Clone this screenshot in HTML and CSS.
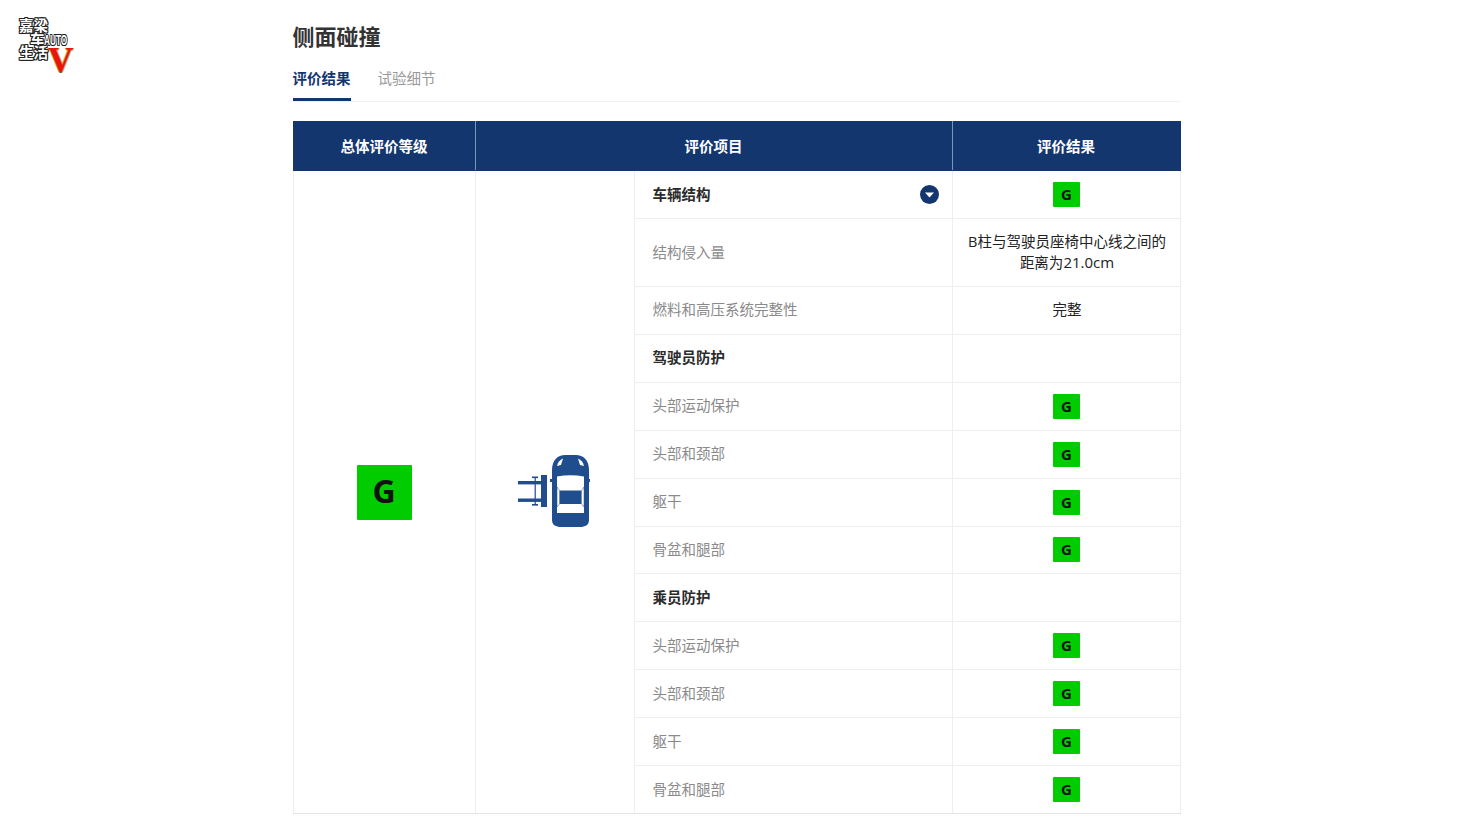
FILE: index.html
```html
<!DOCTYPE html>
<html lang="zh-CN">
<head>
<meta charset="utf-8">
<title>侧面碰撞</title>
<link rel="stylesheet" href="styles.css">
</head>
<body>
<div class="page">
  <aside class="logo-col">
    <div class="logo">
      <div class="logo-line">嘉梁</div>
      <div class="logo-line logo-indent">车<span class="logo-auto">AUTO</span></div>
      <div class="logo-line">生活<span class="logo-v">V</span></div>
    </div>
  </aside>
  <main class="main">
    <h1 class="title">侧面碰撞</h1>
    <nav class="tabs">
      <span class="tab tab-active">评价结果</span>
      <span class="tab">试验细节</span>
    </nav>
    <table class="results">
      <colgroup>
        <col class="c1"><col class="c2"><col class="c3"><col class="c4">
      </colgroup>
      <thead>
        <tr class="h50"><th>总体评价等级</th><th colspan="2">评价项目</th><th>评价结果</th></tr>
      </thead>
      <tbody>
        <tr class="h48">
          <td rowspan="13" class="center span-cell"><span class="badge badge-lg">G</span></td>
          <td rowspan="13" class="center span-cell">
            <svg class="car" viewBox="0 0 72 74" width="72" height="74" aria-hidden="true">
              <g fill="#204d8d">
                <rect x="0" y="27" width="24" height="3.4"/>
                <rect x="0" y="44.5" width="24" height="3.4"/>
                <rect x="23" y="21" width="6" height="32"/>
                <rect x="16.6" y="23" width="1.2" height="28"/>
                <rect x="14" y="22.5" width="6" height="1.6"/>
                <rect x="14" y="50" width="6" height="1.6"/>
                <path d="M34 16C34 6 40 1 47 1H58C65 1 71 6 71 16V66C71 71 67 73 62 73H43C38 73 34 71 34 66Z"/>
                <rect x="32" y="25" width="3" height="3"/>
                <rect x="70" y="25" width="3" height="3"/>
              </g>
              <g fill="#fff">
                <path d="M39 22.500Q52.500 20 66 22.500V59H39Z"/>
                <path d="M39 12C40 8 42 6 45 4.500L43 11Z"/>
                <path d="M66 12C65 8 63 6 60 4.500L62 11Z"/>
              </g>
              <path d="M41.500 36.500H63.500V50H41.500Z" fill="#204d8d"/>
              <path d="M39 33L41.500 36.500V50L39 53Z" stroke="#204d8d" stroke-width=".5" fill="#fff"/>
              <path d="M66 33L63.500 36.500V50L66 53Z" stroke="#204d8d" stroke-width=".5" fill="#fff"/>
            </svg>
          </td>
          <td class="item strong"><div class="item-row"><span>车辆结构</span>
            <svg class="toggle" viewBox="0 0 19 19" width="19" height="19" aria-hidden="true"><circle cx="9.500" cy="9.500" r="9.500" fill="#13366f"/><path d="M5 7.500H14L9.500 12.500Z" fill="#fff"/></svg>
          </div></td>
          <td class="center"><span class="badge">G</span></td>
        </tr>
        <tr class="h68"><td class="item">结构侵入量</td><td class="center value">B柱与驾驶员座椅中心线之间的<br>距离为<span class="num">21.0cm</span></td></tr>
        <tr class="h47"><td class="item">燃料和高压系统完整性</td><td class="center value">完整</td></tr>
        <tr class="h48"><td class="item strong">驾驶员防护</td><td></td></tr>
        <tr class="h48"><td class="item">头部运动保护</td><td class="center"><span class="badge">G</span></td></tr>
        <tr class="h48"><td class="item">头部和颈部</td><td class="center"><span class="badge">G</span></td></tr>
        <tr class="h48"><td class="item">躯干</td><td class="center"><span class="badge">G</span></td></tr>
        <tr class="h47"><td class="item">骨盆和腿部</td><td class="center"><span class="badge">G</span></td></tr>
        <tr class="h48"><td class="item strong">乘员防护</td><td></td></tr>
        <tr class="h48"><td class="item">头部运动保护</td><td class="center"><span class="badge">G</span></td></tr>
        <tr class="h48"><td class="item">头部和颈部</td><td class="center"><span class="badge">G</span></td></tr>
        <tr class="h48"><td class="item">躯干</td><td class="center"><span class="badge">G</span></td></tr>
        <tr class="h48"><td class="item">骨盆和腿部</td><td class="center"><span class="badge">G</span></td></tr>
      </tbody>
    </table>
  </main>
</div>
</body>
</html>
```
FILE: styles.css
```css
* { box-sizing: border-box; }
html, body { margin: 0; height: 100%; overflow: hidden; background: #fff; }
body { font-family: "Open Sans", "Noto Sans CJK SC", sans-serif; color: #222; font-size: 14.5px; }

.page { display: flex; height: 832px; }

.logo-col { width: 292.500px; flex: none; padding: 18px 0 0 19px; }
.logo { width: 60px; font-family: "Noto Sans CJK SC", sans-serif; font-weight: 700; font-size: 14.500px; line-height: 13.500px; color: #fff;
  text-shadow: 1px 0 0 #222, -1px 0 0 #222, 0 1px 0 #222, 0 -1px 0 #222, 1px 1px 0 #222, -1px -1px 0 #222, 1px -1px 0 #222, -1px 1px 0 #222; white-space: nowrap; }
.logo-line { height: 13.500px; }
.logo-indent { padding-left: 11px; }
.logo-auto { font-family: "Liberation Sans", sans-serif; font-size: 15px; display: inline-block; transform: scaleX(.55); transform-origin: left center; margin-left: -1px; }
.logo-v { position: relative; top: 9px; font-family: "Liberation Serif", serif; font-size: 35px; color: #e8150f; margin-left: 0;
  text-shadow: 1px 0 0 #c99a3a, -1px 0 0 #c99a3a, 0 1px 0 #7a5a1a; display: inline-block; vertical-align: top; }

.main { width: 888px; flex: none; }
.title { margin: 0; padding-top: 20px; font-size: 22px; line-height: 30px; font-weight: 700; color: #333; font-family: "Noto Sans CJK SC", sans-serif; }
.tabs { display: flex; gap: 27px; margin-top: 19px; height: 33px; width: 887px; border-bottom: 1px solid #eef0f3; }
.tab { display: block; height: 31.500px; line-height: 18px; padding-top: 1px; color: #999; }
.tab-active { color: #13366f; font-weight: 700; border-bottom: 3px solid #13366f; }

.results { margin-top: 19px; width: 887px; table-layout: fixed; border-collapse: collapse; }
.c1 { width: 182px; }
.c2 { width: 159px; }
.c3 { width: 318px; }
.c4 { width: 228px; }
.results th, .results td { padding: 0; border: 1px solid #eceef0; }
.results th { background: #13366f; color: #fff; font-weight: 700; text-align: center; padding-bottom: 2px; border-color: #13366f; border-left-color: #7d94bd; border-right-color: #7d94bd; }
.results th:first-child { border-left-color: #13366f; }
.results th:last-child { border-right-color: #13366f; }
.results tbody tr:last-child td, .results td.span-cell { border-bottom-color: #e2e4e6; }

.h50 { height: 49px; }
.h48 { height: 48px; }
.h47 { height: 47.500px; }
.h68 { height: 68px; }

.center { text-align: center; vertical-align: middle; }
.value { line-height: 20px; color: #222; padding: 0 9px 0 11px !important; }
.num { font-size: 15px; }
.item { padding-left: 18px !important; padding-right: 13px !important; color: #8a8a8a; vertical-align: middle; line-height: 20px; }
.strong { color: #2b2b2b; font-weight: 700; }
.item-row { display: flex; align-items: center; justify-content: space-between; }
.toggle { display: block; }

.badge { display: block; margin: 0 auto; width: 27px; height: 25px; line-height: 25px; padding-left: 1px; background: #00cc00; color: #111; font-weight: 700; font-size: 15px; text-align: center; border-radius: 1px; }
.badge-lg { width: 55px; height: 55px; line-height: 52px; padding-left: 0; font-size: 32px; }
.car { display: block; margin: 0 auto; position: relative; left: -1px; top: -1px; }
```
